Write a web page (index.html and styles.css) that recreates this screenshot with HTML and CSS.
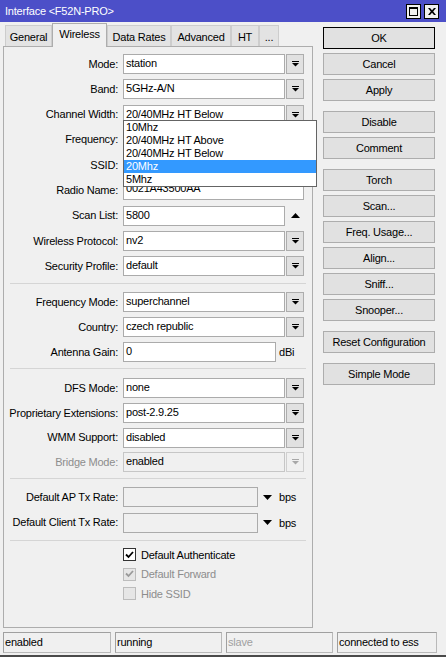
FILE: index.html
```html
<!DOCTYPE html>
<html>
<head>
<meta charset="utf-8">
<link rel="stylesheet" href="styles.css">
</head>
<body>
<div class="win">
  <div class="titlebar">
    <span class="title">Interface &lt;F52N-PRO&gt;</span>
    <div class="tbtns">
      <span class="tbtn"><svg width="9" height="9" viewBox="0 0 9 9"><path d="M0 0H9V9H0Z M1 2V8H8V2Z" fill="#000" fill-rule="evenodd"/></svg></span>
      <span class="tbtn"><svg width="8" height="7" viewBox="0 0 8 7"><path d="M0 0H2L4 2.2L6 0H8L5.2 3.5L8 7H6L4 4.8L2 7H0L2.8 3.5Z" fill="#000"/></svg></span>
    </div>
  </div>
  <div class="main">
    <div class="left">
      <div class="tabs">
        <div class="tab w1">General</div>
        <div class="tab active w2">Wireless</div>
        <div class="tab w3">Data Rates</div>
        <div class="tab w4">Advanced</div>
        <div class="tab w5">HT</div>
        <div class="tab w6">...</div>
      </div>
      <div class="panel">
        <div class="form">
          <div class="sec s1">
            <div class="row"><span class="lbl">Mode:</span><div class="ctl"><div class="inp">station</div><div class="dd"><svg width="7" height="6" viewBox="0 0 7 6"><rect width="7" height="1"/><path d="M0 2H7L3.5 5.5Z"/></svg></div></div></div>
            <div class="row"><span class="lbl">Band:</span><div class="ctl"><div class="inp">5GHz-A/N</div><div class="dd"><svg width="7" height="6" viewBox="0 0 7 6"><rect width="7" height="1"/><path d="M0 2H7L3.5 5.5Z"/></svg></div></div></div>
            <div class="row"><span class="lbl">Channel Width:</span><div class="ctl"><div class="inp">20/40MHz HT Below</div><div class="dd"><svg width="7" height="6" viewBox="0 0 7 6"><rect width="7" height="1"/><path d="M0 2H7L3.5 5.5Z"/></svg></div>
              <div class="list">
                <div class="li">10Mhz</div>
                <div class="li">20/40MHz HT Above</div>
                <div class="li">20/40MHz HT Below</div>
                <div class="li sel">20Mhz</div>
                <div class="li">5Mhz</div>
              </div>
            </div></div>
            <div class="row"><span class="lbl">Frequency:</span><div class="ctl"><div class="inp"></div><div class="dd"><svg width="7" height="6" viewBox="0 0 7 6"><rect width="7" height="1"/><path d="M0 2H7L3.5 5.5Z"/></svg></div></div></div>
            <div class="row"><span class="lbl">SSID:</span><div class="ctl"><div class="inp"></div><div class="dd"><svg width="7" height="6" viewBox="0 0 7 6"><rect width="7" height="1"/><path d="M0 2H7L3.5 5.5Z"/></svg></div></div></div>
            <div class="row"><span class="lbl">Radio Name:</span><div class="ctl"><div class="inp wide radio">0021A43500AA</div></div></div>
            <div class="row"><span class="lbl">Scan List:</span><div class="ctl"><div class="inp">5800</div><div class="up"><svg width="9" height="5" viewBox="0 0 9 5"><path d="M0 5H9L4.5 0Z"/></svg></div></div></div>
            <div class="row"><span class="lbl">Wireless Protocol:</span><div class="ctl"><div class="inp">nv2</div><div class="dd"><svg width="7" height="6" viewBox="0 0 7 6"><rect width="7" height="1"/><path d="M0 2H7L3.5 5.5Z"/></svg></div></div></div>
            <div class="row"><span class="lbl">Security Profile:</span><div class="ctl"><div class="inp">default</div><div class="dd"><svg width="7" height="6" viewBox="0 0 7 6"><rect width="7" height="1"/><path d="M0 2H7L3.5 5.5Z"/></svg></div></div></div>
          </div>
          <div class="sep sep1"></div>
          <div class="sec s2">
            <div class="row"><span class="lbl">Frequency Mode:</span><div class="ctl"><div class="inp">superchannel</div><div class="dd"><svg width="7" height="6" viewBox="0 0 7 6"><rect width="7" height="1"/><path d="M0 2H7L3.5 5.5Z"/></svg></div></div></div>
            <div class="row"><span class="lbl">Country:</span><div class="ctl"><div class="inp">czech republic</div><div class="dd"><svg width="7" height="6" viewBox="0 0 7 6"><rect width="7" height="1"/><path d="M0 2H7L3.5 5.5Z"/></svg></div></div></div>
            <div class="row"><span class="lbl">Antenna Gain:</span><div class="ctl"><div class="inp gain">0</div><span class="unit">dBi</span></div></div>
          </div>
          <div class="sep sep2"></div>
          <div class="sec s3">
            <div class="row"><span class="lbl">DFS Mode:</span><div class="ctl"><div class="inp">none</div><div class="dd"><svg width="7" height="6" viewBox="0 0 7 6"><rect width="7" height="1"/><path d="M0 2H7L3.5 5.5Z"/></svg></div></div></div>
            <div class="row"><span class="lbl">Proprietary Extensions:</span><div class="ctl"><div class="inp">post-2.9.25</div><div class="dd"><svg width="7" height="6" viewBox="0 0 7 6"><rect width="7" height="1"/><path d="M0 2H7L3.5 5.5Z"/></svg></div></div></div>
            <div class="row"><span class="lbl">WMM Support:</span><div class="ctl"><div class="inp">disabled</div><div class="dd"><svg width="7" height="6" viewBox="0 0 7 6"><rect width="7" height="1"/><path d="M0 2H7L3.5 5.5Z"/></svg></div></div></div>
            <div class="row"><span class="lbl dis">Bridge Mode:</span><div class="ctl"><div class="inp off">enabled</div><div class="dd off"><svg width="7" height="6" viewBox="0 0 7 6"><rect width="7" height="1"/><path d="M0 2H7L3.5 5.5Z"/></svg></div></div></div>
          </div>
          <div class="sep sep3"></div>
          <div class="sec s4">
            <div class="row"><span class="lbl">Default AP Tx Rate:</span><div class="ctl"><div class="inp rate"></div><span class="down"><svg width="9" height="5" viewBox="0 0 9 5"><path d="M0 0H9L4.5 5Z"/></svg></span><span class="unit bps">bps</span></div></div>
            <div class="row"><span class="lbl">Default Client Tx Rate:</span><div class="ctl"><div class="inp rate"></div><span class="down"><svg width="9" height="5" viewBox="0 0 9 5"><path d="M0 0H9L4.5 5Z"/></svg></span><span class="unit bps">bps</span></div></div>
          </div>
          <div class="sep sep4"></div>
          <div class="cbs">
            <div class="cbrow"><span class="cb"><svg width="9" height="8" viewBox="0 0 9 8"><path d="M1 3.5L3.5 6L8 1" fill="none" stroke="#000" stroke-width="1.8"/></svg></span><span>Default Authenticate</span></div>
            <div class="cbrow dis"><span class="cb off"><svg width="9" height="8" viewBox="0 0 9 8"><path d="M1 3.5L3.5 6L8 1" fill="none" stroke="#9a9a9a" stroke-width="1.8"/></svg></span><span>Default Forward</span></div>
            <div class="cbrow dis"><span class="cb off"></span><span>Hide SSID</span></div>
          </div>
        </div>
      </div>
    </div>
    <div class="btns">
      <div class="btn def">OK</div>
      <div class="btn">Cancel</div>
      <div class="btn">Apply</div>
      <div class="btn grp">Disable</div>
      <div class="btn">Comment</div>
      <div class="btn grp">Torch</div>
      <div class="btn">Scan...</div>
      <div class="btn">Freq. Usage...</div>
      <div class="btn">Align...</div>
      <div class="btn">Sniff...</div>
      <div class="btn">Snooper...</div>
      <div class="btn grp">Reset Configuration</div>
      <div class="btn grp">Simple Mode</div>
    </div>
  </div>
  <div class="status">
    <div class="cell c1">enabled</div>
    <div class="cell c2">running</div>
    <div class="cell c3 dis">slave</div>
    <div class="cell c4">connected to ess</div>
  </div>
</div>
</body>
</html>
```
FILE: styles.css
```css
* { box-sizing: border-box; }
html, body { margin: 0; padding: 0; }
body {
  background: #f0f0f0;
  font-family: "Liberation Sans", Arial, sans-serif;
  font-size: 11px;
  letter-spacing: -0.22px;
  color: #000;
}
.win {
  width: 446px;
  height: 657px;
  display: flex;
  flex-direction: column;
  background: #f0f0f0;
  border-bottom: 2px solid #4a4a4a;
  overflow: hidden;
}
.titlebar {
  height: 22px;
  flex: none;
  background: #4c4fc8;
  display: flex;
  align-items: center;
  justify-content: space-between;
  padding: 0 7px 0 5px;
  color: #fff;
  font-size: 11px;
}
.tbtns { display: flex; gap: 3px; }
.tbtn {
  width: 15px;
  height: 15px;
  background: #f0f0f0;
  border: 1px solid #000;
  display: flex;
  align-items: center;
  justify-content: center;
}
.main { display: flex; flex: none; }
.left {
  margin-left: 3px;
  width: 310px;
  padding-top: 1px;
  display: flex;
  flex-direction: column;
}
.tabs {
  display: flex;
  align-items: flex-end;
  height: 24px;
  padding-left: 2px;
  margin-bottom: -1px;
  position: relative;
  z-index: 1;
}
.tab {
  height: 21px;
  margin-bottom: 1px;
  background: #e3e3e3;
  border: 1px solid #cdcdcd;
  border-bottom: none;
  display: flex;
  align-items: center;
  justify-content: center;
  padding-top: 1px;
}
.tab.active {
  height: 24px;
  margin-bottom: 0;
  background: #f0f0f0;
  border-color: #adadad;
  padding-top: 0;
  padding-bottom: 3px;
}
.w1 { width: 47px; }
.w2 { width: 55px; }
.w3 { width: 64px; }
.w4 { width: 60px; }
.w5 { width: 28px; }
.w6 { width: 20px; }
.panel {
  height: 582px;
  border: 1px solid #adadad;
  background: #f0f0f0;
}
.form { padding-top: 7px; }
.sec { display: flex; flex-direction: column; }
.s1 { gap: 5.3px; }
.s2 { gap: 5px; }
.s3 { gap: 4.7px; }
.s4 { gap: 5.5px; }
.row {
  display: grid;
  grid-template-columns: 114px auto;
  column-gap: 5px;
  height: 20px;
  align-items: center;
}
.lbl { text-align: right; white-space: nowrap; padding-bottom: 1px; }
.lbl.dis { color: #8d8d8d; }
.ctl { display: flex; align-items: center; position: relative; height: 20px; }
.inp {
  width: 162px;
  height: 20px;
  background: #fff;
  border: 1px solid #ababab;
  padding-left: 2px;
  line-height: 17px;
  white-space: nowrap;
  overflow: hidden;
}
.inp.wide { width: 181px; }
.inp.radio { line-height: 14px; }
.inp.gain { width: 153px; }
.inp.rate { width: 135px; background: #f0f0f0; }
.inp.off { background: #f0f0f0; border-color: #c6c6c6; }
.dd {
  width: 18px;
  height: 20px;
  margin-left: 1px;
  background: #e1e1e1;
  border: 1px solid #adadad;
  display: flex;
  align-items: center;
  justify-content: center;
}
.dd svg { fill: #000; }
.dd.off { background: #f0f0f0; border-color: #cfcfcf; }
.dd.off svg { fill: #a8a8a8; }
.up {
  width: 18px;
  margin-left: 1px;
  display: flex;
  justify-content: center;
  align-items: center;
}
.unit { margin-left: 3px; }
.down { margin-left: 5px; display: flex; align-items: center; }
.unit.bps { margin-left: 7px; }
.sep {
  height: 1px;
  background: #d5d5d5;
  margin: 0 6px;
}
.sep1 { margin-top: 7px; margin-bottom: 8px; }
.sep2 { margin-top: 6px; margin-bottom: 9px; }
.sep3 { margin-top: 6px; margin-bottom: 8px; }
.sep4 { margin-top: 7.5px; margin-bottom: 4px; }
.list {
  position: absolute;
  left: 0;
  top: 15px;
  width: 194px;
  background: #fff;
  border: 1px solid #646464;
  z-index: 5;
}
.li { height: 13px; line-height: 13px; padding-left: 2px; white-space: nowrap; }
.li.sel { background: #3399ff; color: #fff; }
.cbs { display: flex; flex-direction: column; gap: 0.5px; }
.cbrow {
  display: flex;
  align-items: center;
  height: 19px;
  padding-left: 119px;
  gap: 5px;
}
.cbrow.dis { color: #8d8d8d; }
.cb {
  width: 13px;
  height: 13px;
  border: 1px solid #333;
  background: #fff;
  display: flex;
  align-items: center;
  justify-content: center;
}
.cb.off { border-color: #bcbcbc; background: #e6e6e6; }
.btns {
  margin-left: 10px;
  width: 112px;
  padding-top: 5px;
  display: flex;
  flex-direction: column;
  gap: 4px;
}
.btn {
  height: 22px;
  background: #e1e1e1;
  border: 1px solid #adadad;
  display: flex;
  align-items: center;
  justify-content: center;
}
.btn.def { border-color: #000; }
.btn.grp { margin-top: 6px; }
.status {
  display: flex;
  gap: 4px;
  margin-left: 3px;
  margin-top: 4px;
  height: 21px;
  flex: none;
}
.cell {
  height: 21px;
  border: 1px solid #b9b9b9;
  border-top-color: #a0a0a0;
  border-left-color: #a0a0a0;
  padding-left: 1px;
  line-height: 19px;
  white-space: nowrap;
}
.cell.dis { color: #a0a0a0; }
.c1 { width: 108px; }
.c2 { width: 107px; }
.c3 { width: 107px; }
.c4 { width: 100px; }
```
